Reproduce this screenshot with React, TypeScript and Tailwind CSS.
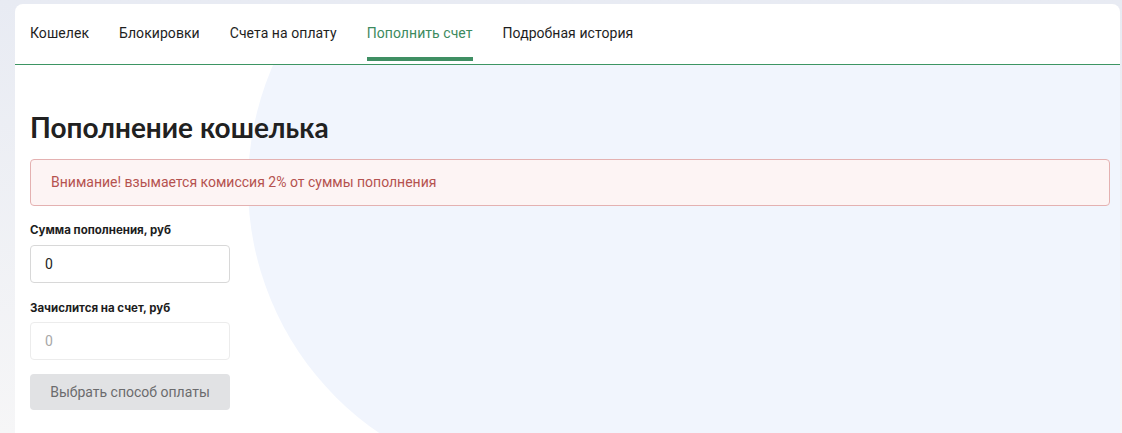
import { useState } from 'react';

const tabs = [
  'Кошелек',
  'Блокировки',
  'Счета на оплату',
  'Пополнить счет',
  'Подробная история',
];

export default function App() {
  const [active, setActive] = useState(3);
  const [amount, setAmount] = useState('0');

  return (
    <div className="min-h-[433px] w-full overflow-hidden bg-gradient-to-b from-[#e8ebf3] to-[#f6f6f7] pt-1 pl-[15px] pr-[2px] font-['Roboto',sans-serif]">
      <div className="flex min-h-[429px] flex-col overflow-hidden rounded-t-lg bg-white">
        {/* Tabs */}
        <div className="flex h-[61px] items-stretch gap-[30px] border-b border-[#3d9563] px-[15px]">
          {tabs.map((tab, i) => (
            <button
              key={tab}
              onClick={() => setActive(i)}
              className={`relative flex items-center pb-[2px] text-[14px] tracking-[0.06px] ${
                i === active ? 'text-[#3d8a5e]' : 'text-[#1e1e1e]'
              }`}
            >
              {tab}
              {i === active && (
                <span className="absolute right-0 bottom-[3px] left-0 h-[4px] bg-[#3f8f63]" />
              )}
            </button>
          ))}
        </div>

        {/* Content */}
        <div className="relative flex-1 overflow-hidden">
          <div className="absolute top-[-180px] right-0 left-[233px] h-[600px] rounded-l-[300px] bg-[#f1f5fd]" />

          <div className="relative pt-[45px] pr-[10px] pb-6 pl-[15px]">
            <h1 className="font-['Lato','Noto_Sans',sans-serif] text-[28px] leading-[34px] font-bold text-[#212121]">
              Пополнение кошелька
            </h1>

            <div className="mt-[15px] flex h-[47px] items-center rounded border border-[#e4b1b1] bg-[#fdf4f4] px-5 text-[14px] text-[#b5524f]">
              Внимание! взымается комиссия 2% от суммы пополнения
            </div>

            <div className="mt-[16px] flex w-[200px] flex-col">
              <label className="font-['Inter',sans-serif] text-[11.5px] leading-[16px] font-bold text-[#1d1d1d]">
                Сумма пополнения, руб
              </label>
              <input
                value={amount}
                onChange={(e) => setAmount(e.target.value)}
                className="mt-[7px] h-[38px] rounded border border-[#d8d8d8] bg-white px-[14px] text-[14px] text-[#222] outline-none"
              />

              <label className="mt-[17px] font-['Inter',sans-serif] text-[11.5px] leading-[16px] font-bold text-[#1d1d1d]">
                Зачислится на счет, руб
              </label>
              <input
                value={amount}
                disabled
                readOnly
                className="mt-[6px] h-[38px] rounded border border-[#ececec] bg-white px-[14px] text-[14px] text-[#a8a8a8] outline-none"
              />

              <button
                disabled
                className="mt-[14px] h-[36px] rounded bg-[#e1e2e4] text-[14px] text-[#6b6b6d]"
              >
                Выбрать способ оплаты
              </button>
            </div>
          </div>
        </div>
      </div>
    </div>
  );
}
